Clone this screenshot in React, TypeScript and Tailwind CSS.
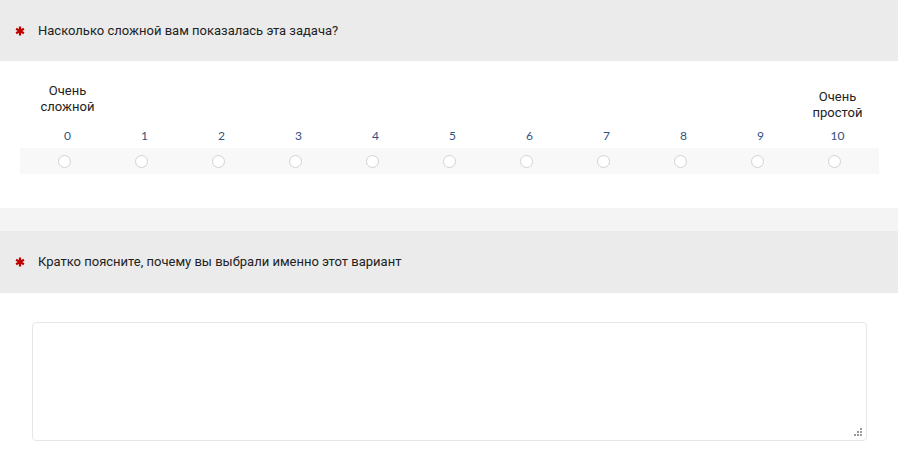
import React from "react";

function Star() {
  return (
    <svg width="10" height="10" viewBox="0 0 10 10" className="shrink-0">
      <g stroke="#c00000" strokeWidth="2.2" strokeLinecap="butt">
        <line x1="5" y1="0.5" x2="5" y2="9.5" />
        <line x1="1.1" y1="2.75" x2="8.9" y2="7.25" />
        <line x1="1.1" y1="7.25" x2="8.9" y2="2.75" />
      </g>
    </svg>
  );
}

function Header({ text, h }: { text: string; h: string }) {
  return (
    <div className={`flex ${h} items-center bg-[#ebebeb] pl-[15px]`}>
      <Star />
      <span className="ml-[13px] text-[13px] text-[#222]" style={{ fontFamily: "Roboto, 'Liberation Sans', sans-serif" }}>
        {text}
      </span>
    </div>
  );
}

export default function App() {
  const nums = Array.from({ length: 11 }, (_, i) => i);
  return (
    <div className="w-[898px] h-[459px] bg-white overflow-hidden" style={{ fontFamily: "Roboto, 'Liberation Sans', sans-serif" }}>
      <Header text="Насколько сложной вам показалась эта задача?" h="h-[61px]" />
      <div className="h-[147px] pt-[22px]">
        <div className="ml-[29px] w-[847px]">
          <div className="grid grid-cols-11 h-[40px] text-[13px] leading-[16px] text-[#222]">
            <div className="col-start-1 text-center">Очень<br />сложной</div>
            <div className="col-start-11 text-center pt-[6px]">Очень<br />простой</div>
          </div>
          <div className="grid grid-cols-11 h-[25px] items-center pt-[1px] text-[12px] text-[#34527f]" style={{ fontFamily: "Lato, sans-serif" }}>
            {nums.map((n) => (
              <div key={n} className="text-center">{n}</div>
            ))}
          </div>
        </div>
        <div className="ml-[20px] w-[859px] h-[26px] bg-[#f8f8f8] pl-[6px]">
          <div className="grid grid-cols-11 w-[847px] h-full items-center">
            {nums.map((n) => (
              <div key={n} className="flex justify-center">
                <div className="h-[13px] w-[13px] rounded-full border border-[#d3d3d3] bg-white" />
              </div>
            ))}
          </div>
        </div>
      </div>
      <div className="h-[23px] bg-[#f4f4f4]" />
      <Header text="Кратко поясните, почему вы выбрали именно этот вариант" h="h-[62px]" />
      <div className="pt-[29px] pl-[32px] pr-[31px]">
        <div className="relative h-[119px] rounded-[4px] border border-[#e3e7ec] bg-white">
          <svg className="absolute right-[3px] bottom-[3px]" width="9" height="9" viewBox="0 0 9 9">
            <g fill="#9a9a9a">
              <rect x="6" y="0" width="2" height="2" />
              <rect x="3" y="3" width="2" height="2" />
              <rect x="6" y="3" width="2" height="2" />
              <rect x="0" y="6" width="2" height="2" />
              <rect x="3" y="6" width="2" height="2" />
              <rect x="6" y="6" width="2" height="2" />
            </g>
          </svg>
        </div>
      </div>
    </div>
  );
}
